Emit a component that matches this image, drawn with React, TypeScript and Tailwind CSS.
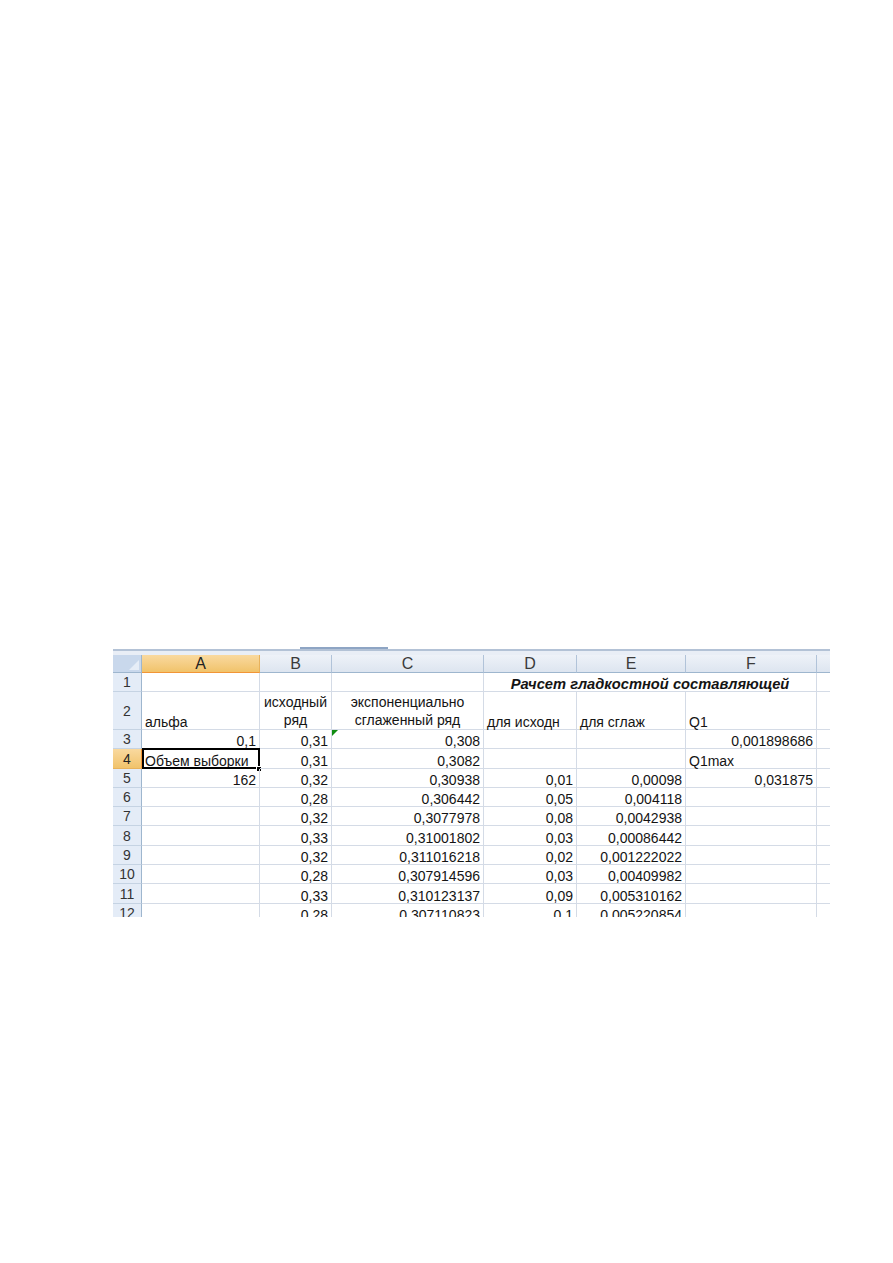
import React from "react";

const FONT = { fontFamily: "'Liberation Sans', Arial, sans-serif" };

type Row = {
  n: number;
  h: string;
  cells: (string | null)[];
};

const dataRows: Row[] = [
  { n: 3, h: "h-[19px]", cells: ["0,1", "0,31", "0,308", null, null, "0,001898686"] },
  { n: 4, h: "h-[20px]", cells: ["Объем выборки", "0,31", "0,3082", null, null, "Q1max"] },
  { n: 5, h: "h-[19px]", cells: ["162", "0,32", "0,30938", "0,01", "0,00098", "0,031875"] },
  { n: 6, h: "h-[19px]", cells: [null, "0,28", "0,306442", "0,05", "0,004118", null] },
  { n: 7, h: "h-[19px]", cells: [null, "0,32", "0,3077978", "0,08", "0,0042938", null] },
  { n: 8, h: "h-[20px]", cells: [null, "0,33", "0,31001802", "0,03", "0,00086442", null] },
  { n: 9, h: "h-[19px]", cells: [null, "0,32", "0,311016218", "0,02", "0,001222022", null] },
  { n: 10, h: "h-[19px]", cells: [null, "0,28", "0,307914596", "0,03", "0,00409982", null] },
  { n: 11, h: "h-[20px]", cells: [null, "0,33", "0,310123137", "0,09", "0,005310162", null] },
  { n: 12, h: "h-[19px]", cells: [null, "0,28", "0,307110823", "0,1", "0,005220854", null] },
];

const isNum = (s: string) => /^[0-9,]+$/.test(s);

function RowHead({ n, h, active }: { n: number; h: string; active?: boolean }) {
  return (
    <div
      className={`${h} flex items-center justify-center border-r border-b text-[14px] leading-none ${
        active
          ? "bg-gradient-to-b from-[#f9d99f] to-[#f1c36a] border-r-[#f29536] border-b-[#e8b25c] text-[#222]"
          : "bg-[#e4ecf7] border-r-[#9eb6ce] border-b-[#c5d3e3] text-[#333]"
      }`}
    >
      {n}
    </div>
  );
}

function Cell({
  h,
  value,
  extra,
  last,
}: {
  h: string;
  value: string | null;
  extra?: React.ReactNode;
  last?: boolean;
}) {
  const right = value !== null && isNum(value);
  return (
    <div
      className={`${h} relative flex items-end ${
        last ? "" : "border-r"
      } border-b border-[#d4dbe6] px-[3px] text-[14px] leading-[14px] text-[#141414] whitespace-nowrap ${
        right ? "justify-end" : "justify-start"
      }`}
    >
      {value}
      {extra}
    </div>
  );
}

function ColHead({ label, active, last }: { label: string; active?: boolean; last?: boolean }) {
  return (
    <div
      className={`h-[18px] flex items-center justify-center ${last ? "" : "border-r"} border-b text-[16px] leading-none ${
        active
          ? "bg-gradient-to-b from-[#f9d99f] to-[#f1c36a] border-r-[#e8b25c] border-b-[#f29536] text-[#222]"
          : "bg-gradient-to-b from-[#eef2f8] to-[#dde5f0] border-r-[#b1c3d9] border-b-[#9eb6ce] text-[#3a3a3a]"
      }`}
    >
      {label}
    </div>
  );
}

export default function App() {
  return (
    <div className="w-[893px] h-[1263px] bg-white pt-[646px] pl-[113px]" style={FONT}>
      <div className="w-[717px] h-[271px] overflow-hidden">
        {/* top band */}
        <div className="h-[1px]" />
        <div className="h-[2px] flex">
          <div className="w-[187px]" />
          <div className="w-[88px] bg-[#8ea5c4]" />
        </div>
        <div className="h-[2px] bg-[#b3c2d6]" />
        <div className="h-[4px] bg-[#e9eef6]" />

        <div className="grid grid-cols-[29px_118px_72px_152px_93px_109px_131px_13px]">
          {/* header row */}
          <div className="h-[18px] relative bg-[#c9d8ec] border-r border-b border-r-[#9eb6ce] border-b-[#9eb6ce]">
            <svg className="absolute right-[2px] bottom-[2px]" width="10" height="10" viewBox="0 0 10 10">
              <polygon points="10,0 10,10 0,10" fill="#e6edf7" />
            </svg>
          </div>
          <ColHead label="A" active />
          <ColHead label="B" />
          <ColHead label="C" />
          <ColHead label="D" />
          <ColHead label="E" />
          <ColHead label="F" />
          <ColHead label="" last />

          {/* row 1 */}
          <RowHead n={1} h="h-[19px]" />
          <Cell h="h-[19px]" value={null} />
          <Cell h="h-[19px]" value={null} />
          <Cell h="h-[19px]" value={null} />
          <div className="col-span-3 h-[19px] flex items-end justify-center border-r border-b border-[#d4dbe6] text-[14.7px] leading-[14px] font-bold italic text-[#141414] whitespace-nowrap">
            Рачсет гладкостной составляющей
          </div>
          <Cell h="h-[19px]" value={null} last />

          {/* row 2 */}
          <RowHead n={2} h="h-[38px]" />
          <Cell h="h-[38px]" value="альфа" />
          <div className="h-[38px] flex items-end justify-center border-r border-b border-[#d4dbe6] text-[14px] leading-[18px] text-[#141414] text-center">
            исходный
            <br />
            ряд
          </div>
          <div className="h-[38px] flex items-end justify-center border-r border-b border-[#d4dbe6] text-[14px] leading-[18px] text-[#141414] text-center">
            экспоненциально
            <br />
            сглаженный ряд
          </div>
          <Cell h="h-[38px]" value="для исходн" />
          <Cell h="h-[38px]" value="для сглаж" />
          <Cell h="h-[38px]" value="Q1" />
          <Cell h="h-[38px]" value={null} last />

          {dataRows.map((r) => (
            <React.Fragment key={r.n}>
              <RowHead n={r.n} h={r.h} active={r.n === 4} />
              {r.cells.map((c, i) => {
                let extra: React.ReactNode = null;
                if (r.n === 4 && i === 0) {
                  extra = (
                    <>
                      <div className="absolute left-0 -top-[1px] -right-[1px] -bottom-[1px] border-2 border-black pointer-events-none" />
                      <div className="absolute -right-[3px] -bottom-[4px] w-[6px] h-[6px] bg-black border border-white" />
                    </>
                  );
                }
                if (r.n === 3 && i === 2) {
                  extra = (
                    <svg className="absolute left-0 top-0" width="6" height="6" viewBox="0 0 6 6">
                      <polygon points="0,0 6,0 0,6" fill="#118c11" />
                    </svg>
                  );
                }
                return <Cell key={i} h={r.h} value={c} extra={extra} />;
              })}
              <Cell h={r.h} value={null} last />
            </React.Fragment>
          ))}
        </div>
      </div>
    </div>
  );
}
